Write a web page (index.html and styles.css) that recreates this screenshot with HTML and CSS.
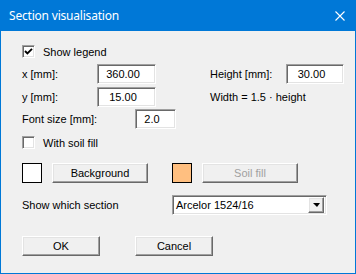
FILE: index.html
```html
<!DOCTYPE html>
<html lang="en">
<head>
  <meta charset="UTF-8">
  <title>Section visualisation</title>
  <link rel="stylesheet" href="styles.css">
</head>
<body>
  <div class="window">
    <div class="titlebar">
      <span class="title">Section visualisation</span>
      <svg class="close" width="10" height="10" viewBox="0 0 10 10">
        <path d="M0.5 0.5 L9.5 9.5 M9.5 0.5 L0.5 9.5" stroke="#fff" stroke-width="1.1" fill="none"/>
      </svg>
    </div>

    <div class="client">
      <!-- Leyenda -->
      <div class="check-row first">
        <span class="checkbox">
          <svg width="9" height="9" viewBox="0 0 9 9">
            <polyline points="1,4 3.4,6.4 8,1.8" stroke="#000" stroke-width="1.9" fill="none"/>
          </svg>
        </span>
        <span>Show legend</span>
      </div>

      <div class="row row-x">
        <span class="lbl lbl-xy">x [mm]:</span>
        <span class="edit edit-xy">360.00</span>
        <span class="lbl lbl-height">Height [mm]:</span>
        <span class="edit edit-height">30.00</span>
      </div>

      <div class="row row-y">
        <span class="lbl lbl-xy">y [mm]:</span>
        <span class="edit edit-xy">15.00</span>
        <span class="lbl note">Width = 1.5 · height</span>
      </div>

      <div class="row row-font">
        <span class="lbl lbl-font">Font size [mm]:</span>
        <span class="edit edit-font">2.0</span>
      </div>

      <!-- Relleno -->
      <div class="check-row soil">
        <span class="checkbox"></span>
        <span>With soil fill</span>
      </div>

      <div class="row colors">
        <span class="swatch white"></span>
        <span class="btn color-btn">Background</span>
        <span class="swatch orange"></span>
        <span class="btn color-btn disabled">Soil fill</span>
      </div>

      <div class="row section">
        <span class="lbl lbl-section">Show which section</span>
        <div class="combo">
          <span class="combo-text">Arcelor 1524/16</span>
          <span class="combo-btn"><span class="arrow"></span></span>
        </div>
      </div>

      <div class="row actions">
        <span class="btn action">OK</span>
        <span class="btn action">Cancel</span>
      </div>
    </div>
  </div>
</body>
</html>
```

FILE: styles.css
```css
* { box-sizing: border-box; }

body {
  margin: 0;
  font-family: "Liberation Sans", Arial, sans-serif;
  font-size: 11px;
  color: #000;
}

.window {
  width: 356px;
  height: 274px;
  background-color: #f0f0f0;
  border: 1px solid #0078d7;
  border-top: 0;
}

/* Barra de titulo */
.titlebar {
  height: 31px;
  background-color: #0078d7;
  color: #fff;
  display: flex;
  align-items: center;
  justify-content: space-between;
  padding: 0 10px 0 8px;
}

.title {
  font-family: "Noto Sans", sans-serif;
  font-size: 12px;
  letter-spacing: -0.2px;
}

.client {
  padding: 14px 0 0 21px;
}

.row {
  display: flex;
  align-items: center;
  height: 20px;
}

.row-x { margin-top: 6px; }
.row-y { margin-top: 3px; }
.row-font { margin-top: 2px; }
.colors { margin-top: 14px; }
.section { margin-top: 12px; }
.actions { margin-top: 21px; }

/* Casillas */
.check-row {
  display: flex;
  align-items: center;
  height: 13px;
}

.check-row.soil { margin-top: 7px; }

.checkbox {
  width: 13px;
  height: 13px;
  margin-right: 8px;
  background-color: #fff;
  border: 1px solid;
  border-color: #a0a0a0 #fff #fff #a0a0a0;
  box-shadow: inset 1px 1px 0 #696969, inset -1px -1px 0 #e3e3e3;
  display: flex;
  align-items: center;
  justify-content: center;
}

.lbl-xy { width: 75px; }
.lbl-height { width: 76px; margin-left: 54px; }
.note { margin-left: 54px; }
.lbl-font { width: 113px; }
.lbl-section { width: 150px; }

/* Campos de texto */
.edit {
  height: 20px;
  background-color: #fff;
  border: 1px solid;
  border-color: #a0a0a0 #fff #fff #a0a0a0;
  box-shadow: inset 1px 1px 0 #696969, inset -1px -1px 0 #e3e3e3;
  text-align: center;
  padding-right: 7px;
  line-height: 18px;
}

.edit-xy { width: 59px; }
.edit-height { width: 58px; }
.edit-font { width: 41px; }

/* Botones */
.btn {
  height: 20px;
  background-color: #f0f0f0;
  border: 1px solid;
  border-color: #fff #696969 #696969 #fff;
  box-shadow: inset -1px -1px 0 #a0a0a0, inset 1px 1px 0 #e3e3e3;
  text-align: center;
  line-height: 18px;
}

.btn.disabled { color: #a0a0a0; }

.swatch {
  width: 20px;
  height: 20px;
  border: 1px solid #000;
  margin-right: 10px;
}

.swatch.white { background-color: #fff; }
.swatch.orange { background-color: #ffbf80; margin-left: 24px; }

.color-btn { width: 96px; }

.action { width: 78px; }
.action + .action { margin-left: 35px; }

/* Lista desplegable */
.combo {
  width: 155px;
  height: 20px;
  background-color: #fff;
  border: 1px solid;
  border-color: #a0a0a0 #fff #fff #a0a0a0;
  box-shadow: inset 1px 1px 0 #696969, inset -1px -1px 0 #e3e3e3;
  display: flex;
  align-items: center;
  justify-content: space-between;
  padding: 1px 2px 1px 2px;
}

.combo-text { padding-left: 1px; }

.combo-btn {
  width: 16px;
  height: 16px;
  background-color: #f0f0f0;
  border: 1px solid;
  border-color: #fff #696969 #696969 #fff;
  box-shadow: inset -1px -1px 0 #a0a0a0, inset 1px 1px 0 #e3e3e3;
  display: flex;
  align-items: center;
  justify-content: center;
}

.arrow {
  width: 0;
  height: 0;
  border-left: 4px solid transparent;
  border-right: 3px solid transparent;
  border-top: 4px solid #000;
}
```
